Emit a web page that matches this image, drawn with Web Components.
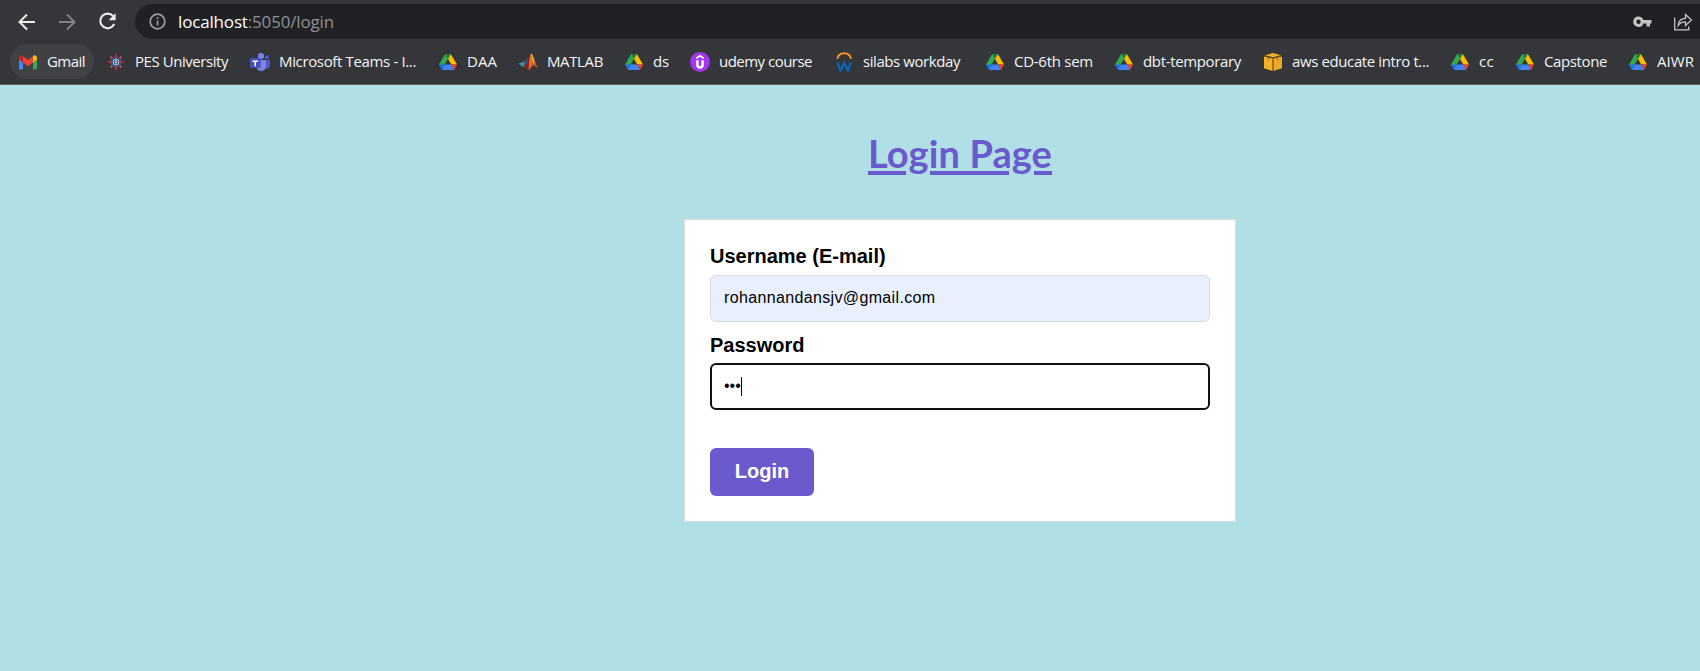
<!DOCTYPE html>
<html lang="en">
<head>
<meta charset="utf-8">
<title>Login Page</title>
<style>
html,body{margin:0;height:100%;overflow:hidden;background:#b0e0e6}
body{font-family:"Liberation Sans",Arial,sans-serif}
</style>
</head>
<body>
<browser-toolbar></browser-toolbar>
<bookmark-bar>
<bookmark-item icon="gmail" fit="38" cell="51" class="hover">Gmail</bookmark-item>
<bookmark-item icon="pes" fit="93" cell="106">PES University</bookmark-item>
<bookmark-item icon="teams" fit="137" cell="150">Microsoft Teams - I...</bookmark-item>
<bookmark-item icon="drive" fit="30" cell="42">DAA</bookmark-item>
<bookmark-item icon="matlab" fit="56" cell="68">MATLAB</bookmark-item>
<bookmark-item icon="drive" fit="16" cell="28">ds</bookmark-item>
<bookmark-item icon="udemy" fit="93" cell="106">udemy course</bookmark-item>
<bookmark-item icon="workday" fit="97" cell="113">silabs workday</bookmark-item>
<bookmark-item icon="drive" fit="79" cell="91">CD-6th sem</bookmark-item>
<bookmark-item icon="drive" fit="98" cell="111">dbt-temporary</bookmark-item>
<bookmark-item icon="aws" fit="137" cell="149">aws educate intro t...</bookmark-item>
<bookmark-item icon="drive" fit="15" cell="27">cc</bookmark-item>
<bookmark-item icon="drive" fit="63" cell="75">Capstone</bookmark-item>
<bookmark-item icon="drive" fit="37" cell="40">AIWR</bookmark-item>
</bookmark-bar>
<login-page>
<login-field label="Username (E-mail)" filled><fit-text width="211.500">rohannandansjv@gmail.com</fit-text></login-field>
<login-field label="Password" active>•••</login-field>
<login-button>Login</login-button>
</login-page>
<script>
const icons={
gmail:'<path fill="#4285f4" d="M1 6v10.300c0 .7.5 1.200 1.200 1.200H5V9z"/><path fill="#34a853" d="M15 9v8.500h2.800c.7 0 1.200-.5 1.200-1.200V6z"/><path fill="#fbbc04" d="M15 4V10.500l4-3V5.600c0-2.100-2.300-3.100-4-1.800z"/><path fill="#ea4335" d="M5 10.500V4.300l5 3.700 5-3.700v6.200l-5 3.700z"/><path fill="#c5221f" d="M1 5.600v1.900l4 3V3.800c-1.700-1.300-4-.3-4 1.800z"/>',
pes:'<path stroke="#dd6a50" stroke-width="1.400" d="M4.500 4.500l11 11M15.500 4.500l-11 11"/><path fill="#e0262c" d="M10 .8l1.600 5H8.400zM10 19.200l1.600-5H8.400zM.8 10l5-1.600v3.200zM19.200 10l-5-1.600v3.200z"/><circle cx="10" cy="10" r="4.800" fill="#25356f" stroke="#5c4a86" stroke-width="1.200"/><circle cx="10" cy="10" r="3" fill="#2d6d9b" stroke="#b9ddeb" stroke-width=".9"/><path fill="#f0bc84" d="M9.200 8.200h1.600v3.400H9.200z"/>',
teams:'<circle cx="11" cy="4" r="3.100" fill="#7b83eb"/><circle cx="17" cy="5.200" r="2" fill="#5059c9"/><path fill="#5059c9" d="M14 8h6v5.500a3.500 3.500 0 0 1-6 2z"/><path fill="#7b83eb" d="M7 8h9v6.500a5 5 0 0 1-9 2.500z"/><rect y="6" width="10.500" height="10" rx="1" fill="#454fb9"/><path fill="#fff" d="M2.500 8.500h5.500V10H6v4.300H4.500V10h-2z"/>',
drive:'<path fill="#34a853" d="M7.200 2h5.600L4 17 1 12.500z"/><path fill="#188038" d="M7.200 2h5.600L10 7z"/><path fill="#fbbc04" d="M12.800 2L19 12.500h-5.700L10 7z"/><path fill="#4285f4" d="M6.800 12.500h6.500L16 18H4z"/><path fill="#1a73e8" d="M1 12.500h5.800L4 18z"/><path fill="#ea4335" d="M13.300 12.500H19L16 18z"/>',
matlab:'<path fill="#4590ad" d="M.3 11.800l6-2.400L8.500 12 5.500 15z"/><path fill="#23627d" d="M6.300 9.400c2-.3 3.300-3.500 5-4.700l-2.800 8-3 2.300z"/><path fill="#8a241a" d="M5.500 15c3-.8 4.600-10.600 8.300-13.800l-3 17.300c-1.400-1.700-2.500-3.800-5.300-3.500z"/><path fill="#ec6b22" d="M10.800 18.500c.1-6 .7-17.500 3-17.300l1.300 5.500-.4 6.600c-1.600 1.300-2.500 3.800-3.900 5.200z"/><path fill="#f6b447" d="M13.200 1.700c1.900-.4 3.800 9.500 6.300 14.300-1.500-1.400-2.700-2.900-4-2.700-.8-4.500-1.300-8.500-2.300-11.600z"/><path fill="#b83520" d="M15.500 7.500c1.200 3.200 2.500 6.700 4 8.700-1.300-1.400-2.500-2.200-3.200-1.900z"/>',
udemy:'<circle cx="10" cy="10" r="10" fill="#a435f0"/><path d="M6.300 6.200L10 3.800l3.700 2.400" fill="none" stroke="#fff" stroke-width="1.700"/><path d="M7.400 8.300v4.500c0 3.600 5.200 3.600 5.200 0V8.300" fill="none" stroke="#fff" stroke-width="2.500"/>',
workday:'<path d="M3.300 6.900C4.500-.7 15.800-.7 17 6.900" fill="none" stroke="#f8981d" stroke-width="1.900"/><path d="M3.400 10.300l3 8.600 3.800-7.900 3.800 7.900 3-8.600" fill="none" stroke="#0864bd" stroke-width="2.200"/>',
aws:'<path fill="#f5b324" d="M1 4.500L9.700 6.600V19L1 16.300z"/><path fill="#efa826" d="M19 4.500l-8.700 2.100V19L19 16.300z"/><path fill="#f5b324" d="M2 3.200L10 1l8 2.200-8 2.100z"/><path fill="none" stroke="#7b561b" stroke-width=".8" d="M1 3.800L10 6l9-2.200M10 6v13M5.500 4.900v3.300M14.500 4.900v3.300"/>'
};
function define(name,markup,setup){
  const template=document.createElement('template');
  template.innerHTML=markup;
  customElements.define(name,class extends HTMLElement{
    constructor(){super();this.attachShadow({mode:'open'}).append(template.content.cloneNode(true))}
    connectedCallback(){if(setup)setup(this,this.shadowRoot)}
  });
}
/* Spreads a label over its preferred width by adjusting its tracking. */
define('fit-text','<style>:host{display:inline-block;white-space:nowrap}span{display:inline-block;text-decoration:var(--line,none);text-decoration-thickness:4px;text-underline-offset:3px}</style><span><slot></slot></span>',(host,root)=>{
  const span=root.querySelector('span');
  span.style.letterSpacing='';
  const natural=span.getBoundingClientRect().width;
  const n=host.textContent.trim().length;
  const w=+host.getAttribute('width');
  if(w&&natural)span.style.letterSpacing=((w-natural)/n)+'px';
});
define('browser-toolbar',`<style>
:host{display:block;background:#35363a;height:39px;padding-top:4px;box-sizing:border-box}
.row{display:flex;align-items:center;height:35px}
.nav{display:grid;grid-template-columns:40px 40px 40px;width:127px;padding-left:7px;box-sizing:border-box;height:35px;align-items:center;justify-items:center;flex:none}
.address{flex:1;height:35px;margin-left:8px;background:#202124;border-radius:18px 0 0 18px;display:flex;align-items:center;padding-left:14px;color:#8d8f93;font:17px/24px "Open Sans",sans-serif}
.url{margin-left:12px;flex:1}
b{font-weight:400;color:#fff}
svg{display:block;flex:none}
.key{margin-right:21px}.share{margin-right:7px}
</style><div class="row"><div class="nav">
<svg width="20" height="20" viewBox="0 0 20 20" fill="none" stroke="#eceded" stroke-width="2"><path d="M18 10H3M10 2.500L2.500 10 10 17.500"/></svg>
<svg width="20" height="20" viewBox="0 0 20 20" fill="none" stroke="#818286" stroke-width="2"><path d="M2 10h15M10 2.500l7.500 7.500L10 17.500"/></svg>
<svg width="20" height="20" viewBox="0 0 20 20"><path d="M16.200 4.200A7.300 7.300 0 1 0 17.200 12" fill="none" stroke="#eceded" stroke-width="2.100"/><path d="M18.600 1.300V8.300H11.600z" fill="#eceded"/></svg></div>
<div class="address"><svg width="17" height="17" viewBox="0 0 17 17"><circle cx="8.500" cy="8.500" r="7.300" fill="none" stroke="#9aa0a6" stroke-width="1.700"/><path fill="#9aa0a6" d="M7.700 4.300h1.700V6H7.700zM7.700 7.400h1.700v5H7.700z"/></svg>
<div class="url"><fit-text width="156"><b>localhost</b>:5050/login</fit-text></div>
<svg class="key" width="19" height="12" viewBox="0 0 19 12"><path fill="#c3c4c6" fill-rule="evenodd" d="M5.500.500a5.200 5.200 0 1 0 4.900 7h3.100v3h3.500v-3h1.500V4h-8.100A5.200 5.200 0 0 0 5.500.500zm0 3a2.200 2.200 0 1 1 0 4.400 2.200 2.200 0 0 1 0-4.400z"/></svg>
<svg class="share" width="20" height="18" viewBox="0 0 20 18" fill="none" stroke="#c3c4c6" stroke-width="1.300"><path d="M1.700 4.500v12.300h14v-3.300"/><path d="M5.200 12.500c.3-4.700 2.900-7.100 7.300-7.200V1.500l6 5.500-6 5.500V8.800c-3.200-.1-5.500 1-7.300 3.700z"/></svg>
</div></div>`);
define('bookmark-bar',`<style>:host{display:flex;height:46px;padding:5px 0 5px 10px;box-sizing:border-box;background:#35363a;border-bottom:1px solid #626367}</style><slot></slot>`);
define('bookmark-item',`<style>
:host{display:flex;flex:none;height:35px;color:#f4f5f6;font:15px/20px "Open Sans",sans-serif}
.pill{display:flex;align-items:center;height:35px;padding:0 0 0 8px;border-radius:18px}
:host(.hover) .pill{background:#404145;padding-right:9px}
svg{display:block;flex:none;margin-right:9px}
fit-text{margin-bottom:2px}
</style><div class="pill"><svg width="20" height="20" viewBox="0 0 20 20"></svg></div>`,(host,root)=>{
  const icon=host.getAttribute('icon');
  root.querySelector('svg').innerHTML=icons[icon];
  const text=document.createElement('fit-text');
  text.setAttribute('width',host.getAttribute('fit'));
  text.textContent=host.textContent;
  host.style.width=(icon==='gmail'?88:+host.getAttribute('cell')+38)+'px';
  root.querySelector('.pill').append(text);
});
define('login-page',`<style>
:host{display:flex;flex-direction:column;align-items:center;padding-left:220px;height:586px;background:#b0e0e6}
h1{margin:44px 0 0;height:90px;color:#6a5acd;font:700 38px/48px Lato,sans-serif;--line:underline}
.card{width:552px;height:303px;box-sizing:border-box;border:1px solid #dcdcdc;background:#fff;padding:25px}
</style><h1><fit-text width="184">Login Page</fit-text></h1><div class="card"><slot></slot></div>`);
define('login-field',`<style>
:host{display:block;height:88px;color:#000}
label{display:block;font-weight:700;font-size:20px;line-height:23px;height:30px;box-sizing:border-box}
:host([active]) label{padding-top:1px}
.box{height:47px;box-sizing:border-box;border:1px solid #dcdcdc;border-radius:6px;padding:0 13px;display:flex;align-items:center;font-size:16px;line-height:18px}
.box span{margin-bottom:2px}
:host([filled]) .box{background:#e8f0fe}
:host([active]) .box{border:2px solid #101010;padding:0 12px}
i{display:none;width:1px;height:19px;background:#000}
:host([active]) i{display:block}
</style><label></label><div class="box"><span><slot></slot></span><i></i></div>`,(host,root)=>{
  root.querySelector('label').textContent=host.getAttribute('label');
});
define('login-button',`<style>:host{display:block;margin-top:27px}button{display:block;width:104px;height:48px;border:0;border-radius:6px;background:#6a5acd;color:#fff;font:700 20px/23px "Liberation Sans",sans-serif;padding:0 0 2px}</style><button><slot></slot></button>`);
/* Fields are slotted, so their tracking is measured once every element exists. */
document.querySelectorAll('login-field fit-text').forEach(el=>el.connectedCallback());
</script>
</body>
</html>
